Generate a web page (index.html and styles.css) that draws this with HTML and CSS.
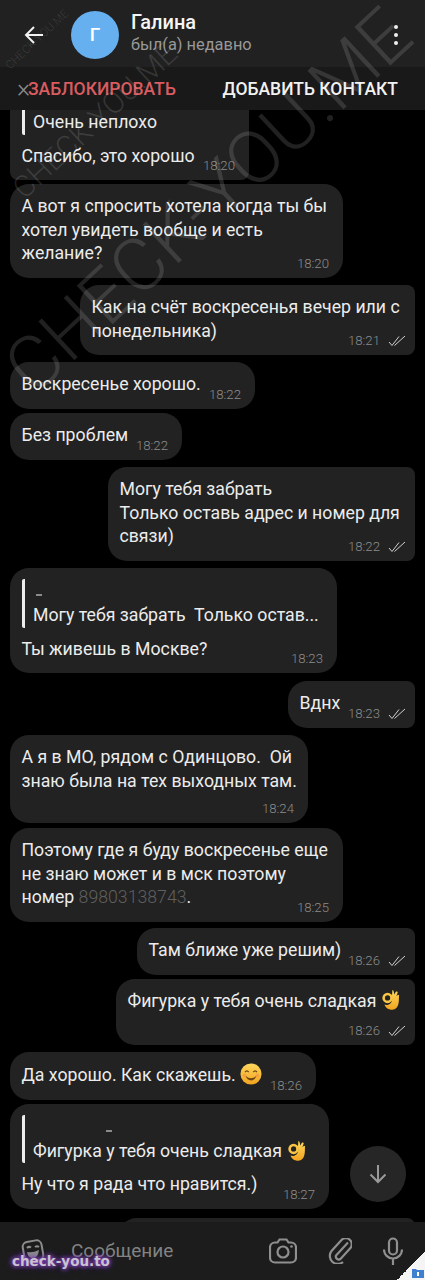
FILE: index.html
```html
<!DOCTYPE html>
<html lang="ru">
<head>
<meta charset="utf-8">
<title>Галина</title>
<link rel="stylesheet" href="styles.css">
</head>
<body>
<div class="app">
  <header class="header">
    <svg class="back" viewBox="0 0 20 20" width="20" height="20"><path d="M19 10H2M10 2l-8 8 8 8" fill="none" stroke="#f2f2f2" stroke-width="2"/></svg>
    <div class="avatar">Г</div>
    <div class="peer">
      <div class="peer-name">Галина</div>
      <div class="peer-status">был(а) недавно</div>
    </div>
    <div class="dots"><i></i><i></i><i></i></div>
  </header>

  <main class="chat">
    <div class="actions">
      <div class="block"><span class="close">×</span><span class="block-label">ЗАБЛОКИРОВАТЬ</span></div>
      <div class="add">ДОБАВИТЬ КОНТАКТ</div>
    </div>

    <div class="msg in w1">
      <div class="reply"><span class="reply-text">Очень неплохо</span></div>
      Спасибо, это хорошо
      <span class="meta">18:20</span>
    </div>
    <div class="msg in w2">
      А вот я спросить хотела когда ты бы<br>хотел увидеть вообще и есть<br>желание?
      <span class="meta">18:20</span>
    </div>
    <div class="msg out w3">
      Как на счёт воскресенья вечер или с<br>понедельника)
      <span class="meta">18:21 <svg class="tick" viewBox="0 0 18 12" width="18" height="12"><path d="M1 7l3 3.500L11 1.500M6.500 10.500L17 1" fill="none" stroke="#d0d0d0"/></svg></span>
    </div>
    <div class="msg in w4">
      Воскресенье хорошо.
      <span class="meta">18:22</span>
    </div>
    <div class="msg in w5">
      Без проблем
      <span class="meta">18:22</span>
    </div>
    <div class="msg out w6">
      Могу тебя забрать<br>Только оставь адрес и номер для<br>связи)
      <span class="meta">18:22 <svg class="tick" viewBox="0 0 18 12" width="18" height="12"><path d="M1 7l3 3.500L11 1.500M6.500 10.500L17 1" fill="none" stroke="#d0d0d0"/></svg></span>
    </div>
    <div class="msg in w7">
      <div class="reply"><i class="speck speck-a"></i><span class="reply-text">Могу тебя забрать&nbsp; Только остав...</span></div>
      Ты живешь в Москве?
      <span class="meta">18:23</span>
    </div>
    <div class="msg out w8">
      Вднх
      <span class="meta">18:23 <svg class="tick" viewBox="0 0 18 12" width="18" height="12"><path d="M1 7l3 3.500L11 1.500M6.500 10.500L17 1" fill="none" stroke="#d0d0d0"/></svg></span>
    </div>
    <div class="msg in w9">
      А я в МО, рядом с Одинцово.&nbsp; Ой<br>знаю была на тех выходных там.
      <span class="meta">18:24</span>
    </div>
    <div class="msg in w10">
      Поэтому где я буду воскресенье еще<br>не знаю может и в мск поэтому<br>номер <span class="phone">89803138743</span>.
      <span class="meta">18:25</span>
    </div>
    <div class="msg out w11">
      Там ближе уже решим)
      <span class="meta">18:26 <svg class="tick" viewBox="0 0 18 12" width="18" height="12"><path d="M1 7l3 3.500L11 1.500M6.500 10.500L17 1" fill="none" stroke="#d0d0d0"/></svg></span>
    </div>
    <div class="msg out w12">
      Фигурка у тебя очень сладкая <svg class="emoji" viewBox="0 0 24 24" width="21" height="21"><use href="#ok"/></svg>
      <span class="meta">18:26 <svg class="tick" viewBox="0 0 18 12" width="18" height="12"><path d="M1 7l3 3.500L11 1.500M6.500 10.500L17 1" fill="none" stroke="#d0d0d0"/></svg></span>
    </div>
    <div class="msg in w13">
      Да хорошо. Как скажешь. <svg class="emoji" viewBox="0 0 24 24" width="22" height="22"><use href="#smile"/></svg>
      <span class="meta">18:26</span>
    </div>
    <div class="msg in w14">
      <div class="reply"><i class="speck speck-b"></i><span class="reply-text">Фигурка у тебя очень сладкая <svg class="emoji" viewBox="0 0 24 24" width="21" height="21"><use href="#ok"/></svg></span></div>
      Ну что я рада что нравится.)
      <span class="meta">18:27</span>
    </div>
    <div class="msg out w15">&nbsp;</div>

    <button class="down" type="button" aria-label="Вниз">
      <svg viewBox="0 0 20 20" width="20" height="20"><path d="M10 1v17M2.500 10.500L10 18l7.500-7.500" fill="none" stroke="#9a9a9a" stroke-width="2"/></svg>
    </button>
  </main>

  <footer class="composer">
    <svg class="sticker" viewBox="0 0 26 26" width="26" height="26"><g fill="none" stroke="#8c8c8c" stroke-width="2"><rect x="3.500" y="3" width="19" height="20" rx="5" transform="rotate(-10 13 13)"/><path d="M7 10q2-2 4-.5M15 9q2-1.500 4 0"/></g><path d="M7 14q6 1 12-2q-1 8-6 8t-6-6z" fill="#8c8c8c"/></svg>
    <div class="placeholder">Сообщение</div>
    <div class="tools">
      <svg viewBox="0 0 28 26" width="28" height="26"><g fill="none" stroke="#8f8f8f" stroke-width="2.200"><path d="M6 4.500h2.500L10.500 1.500h7L19.500 4.500H22a5 5 0 0 1 5 5v10a5 5 0 0 1-5 5H6a5 5 0 0 1-5-5v-10a5 5 0 0 1 5-5z"/><circle cx="14" cy="14" r="5.500"/></g><circle cx="22.500" cy="8.500" r="1.300" fill="#8f8f8f"/></svg>
      <svg viewBox="0 0 24 26" width="24" height="26"><path d="M20 5.500L8 18.500a3 3 0 0 0 4.500 3.500L22 11.500a6 6 0 0 0-8.500-8.500L3.500 14a8 8 0 0 0 11.500 11" fill="none" stroke="#8f8f8f" stroke-width="2.200" transform="translate(0 -1)"/></svg>
      <svg viewBox="0 0 20 28" width="20" height="28"><g fill="none" stroke="#8f8f8f" stroke-width="2.200"><rect x="6" y="1.500" width="8" height="16" rx="4"/><path d="M1 12.500a9 9 0 0 0 18 0M10 21.500V28"/></g></svg>
    </div>
  </footer>

  <div class="marks">
    <span class="mark mark-big">CHECK-YOU.ME</span>
    <span class="mark mark-mid">CHECK-YOU.ME</span>
    <span class="mark mark-small">CHECK-YOU.ME</span>
  </div>
  <div class="stamp">check-you.to</div>
  <div class="corner">
    <svg viewBox="0 0 12 10" width="12" height="10"><path d="M0 1h4l1 1h7v8H0z" fill="#3f7fd0"/><rect x="5" y="4" width="2" height="4" fill="#fff"/></svg>
  </div>
</div>

<svg class="defs" width="0" height="0">
  <defs>
    <linearGradient id="yel" x1="0" y1="0" x2="0" y2="1"><stop offset="0" stop-color="#fdd75e"/><stop offset="1" stop-color="#f2a41f"/></linearGradient>
    <symbol id="smile" viewBox="0 0 24 24">
      <circle cx="12" cy="12" r="11.500" fill="url(#yel)"/>
      <path d="M5.500 10q2-3 4 0M14.500 10q2-3 4 0" fill="none" stroke="#6d4512" stroke-width="1.300"/>
      <path d="M6 14q6 5.500 12 0q-2 5-6 5t-6-5z" fill="#6d4512"/>
      <circle cx="5" cy="13.500" r="2" fill="#f48a4a" opacity=".5"/><circle cx="19" cy="13.500" r="2" fill="#f48a4a" opacity=".5"/>
    </symbol>
    <symbol id="ok" viewBox="0 0 24 24">
      <path d="M13 0c1 0 2 2 2 5l2-3c1-1 2.500 0 2 1l-1.500 4 2-1.500c1 0 1.500 1 1 2 0 6 0 15-7.500 15-5 0-8-2.500-9-6 2.500 1 5 .5 7-1.500 2-2 2-6 1.500-8z" fill="url(#yel)"/>
      <circle cx="7.500" cy="9" r="4.500" fill="none" stroke="#f8c544" stroke-width="3"/>
    </symbol>
  </defs>
</svg>
</body>
</html>
```

FILE: styles.css
```css
* { box-sizing: border-box; }
html, body { margin: 0; padding: 0; background: #000; }
body { font-family: Roboto, "Noto Sans", sans-serif; color: #ececec; }

.app {
  position: relative;
  width: 425px;
  height: 1280px;
  display: flex;
  flex-direction: column;
  overflow: hidden;
  background: #000;
}

.header {
  flex: 0 0 67px;
  display: flex;
  align-items: center;
  padding: 3px 27px 0 24px;
  background: #212121;
  z-index: 3;
}
.back { flex: none; }
.avatar {
  flex: none;
  width: 48px;
  height: 48px;
  margin-left: 27px;
  border-radius: 50%;
  background: #66b0f0;
  color: #fff;
  font-size: 19px;
  font-weight: 500;
  line-height: 48px;
  text-align: center;
}
.peer { flex: 1; margin-left: 12px; }
.peer-name { font-size: 20px; font-weight: 500; line-height: 24px; color: #f5f5f5; margin-top: -5px; }
.peer-status { font-size: 16.400px; line-height: 22px; color: #989898; }
.dots { display: flex; flex-direction: column; gap: 3.500px; }
.dots i { width: 4.500px; height: 4.500px; border-radius: 50%; background: #efefef; }

.chat {
  position: relative;
  flex: 1;
  min-height: 0;
  display: flex;
  flex-direction: column;
  align-items: flex-start;
  padding: 8px 10px 0;
  overflow: hidden;
}

.actions {
  position: absolute;
  top: 0;
  left: 0;
  right: 0;
  height: 43px;
  display: flex;
  align-items: center;
  justify-content: space-between;
  padding: 0 27px 0 17px;
  background: #191919;
  font-size: 17.500px;
  font-weight: 500;
  z-index: 2;
}
.block { display: flex; align-items: center; }
.close { width: 11px; font-size: 25px; font-weight: 300; line-height: 20px; color: #8a8a8a; }
.block-label { color: #d85c60; }
.add { color: #f2f2f2; }

.msg {
  position: relative;
  flex: none;
  min-height: 47px;
  margin-top: 7px;
  padding: 11px 12px 12px 11.500px;
  background: #222;
  border-radius: 19px;
  font-size: 17.700px;
  line-height: 23.500px;
  white-space: nowrap;
}
.out { align-self: flex-end; border-radius: 19px 8px 8px 19px; }

.w1 { width: 239px; margin-top: 0; border-radius: 8px; }
.w2 { width: 333px; margin-top: 4px; }
.w3 { width: 335px; margin-top: 7.500px; }
.w4 { width: 245px; }
.w5 { width: 172px; margin-top: 4px; }
.w6 { width: 307px; }
.w7 { width: 327px; margin-top: 7.500px; }
.w8 { width: 127px; margin-top: 8px; }
.w9 { width: 298px; padding-bottom: 30px; }
.w10 { width: 333px; margin-top: 5px; }
.w11 { width: 278px; margin-top: 6.500px; }
.w12 { width: 299px; margin-top: 4px; padding-bottom: 31.500px; }
.w13 { width: 306px; }
.w14 { width: 319px; margin-top: 4px; }
.w15 { width: 297px; margin-top: 9px; }

.meta {
  position: absolute;
  right: 14px;
  bottom: 6px;
  display: flex;
  align-items: center;
  gap: 8px;
  font-size: 13.200px;
  font-weight: 300;
  line-height: 16px;
  color: #8b8b8b;
}
.out .meta { right: 9px; }

.reply {
  position: relative;
  height: 48.500px;
  margin-bottom: 10px;
  padding: 25px 0 0 8.500px;
  border-left: 3px solid #ececec;
  border-radius: 2px;
}
.reply-text { display: flex; align-items: center; gap: 5px; }
.speck { position: absolute; height: 2px; background: #8a8a8a; }
.speck-a { left: 11px; top: 15px; width: 6px; }
.speck-b { left: 81px; top: 15px; width: 6px; }

.phone { color: #5f5f5f; font-weight: 300; }
.emoji { vertical-align: -4px; }

.down {
  position: absolute;
  right: 19px;
  bottom: 20px;
  width: 56px;
  height: 56px;
  padding: 0;
  display: flex;
  align-items: center;
  justify-content: center;
  border: 0;
  border-radius: 50%;
  background: #262626;
}

.composer {
  flex: 0 0 58px;
  display: flex;
  align-items: center;
  padding: 0 22px 0 20px;
  background: #1c1c1c;
  z-index: 2;
}
.sticker { flex: none; }
.placeholder { flex: 1; margin-left: 25px; font-size: 19px; color: #838383; margin-top: -2px; }
.tools { display: flex; align-items: center; gap: 31px; }

.marks { position: absolute; inset: 0; pointer-events: none; z-index: 4; overflow: hidden; }
.mark {
  position: absolute;
  transform-origin: 0 100%;
  transform: rotate(-43deg);
  white-space: nowrap;
  font-weight: 300;
  color: rgba(255, 255, 255, .13);
}
.mark-big { left: 48px; top: 322px; font-size: 74px; line-height: 90px; }
.mark-mid { left: 30px; top: 170px; font-size: 30px; line-height: 36px; }
.mark-small { left: 12px; top: 58px; font-size: 11.500px; line-height: 14px; }

.stamp {
  position: absolute;
  left: 12px;
  bottom: 10px;
  z-index: 5;
  font-family: "DejaVu Sans", sans-serif;
  font-size: 13.500px;
  font-weight: 700;
  line-height: 18px;
  color: #c9c2d0;
  text-shadow: 0 0 4px #7a3fb5, 0 0 4px #7a3fb5, 0 0 7px #7a3fb5;
}
.corner {
  position: absolute;
  right: 0;
  bottom: 0;
  z-index: 5;
  width: 28px;
  height: 28px;
  padding: 16px 0 0 15px;
  background: linear-gradient(135deg, transparent 50%, #f4f4f4 50%);
  display: flex;
}
.defs { position: absolute; }
```
